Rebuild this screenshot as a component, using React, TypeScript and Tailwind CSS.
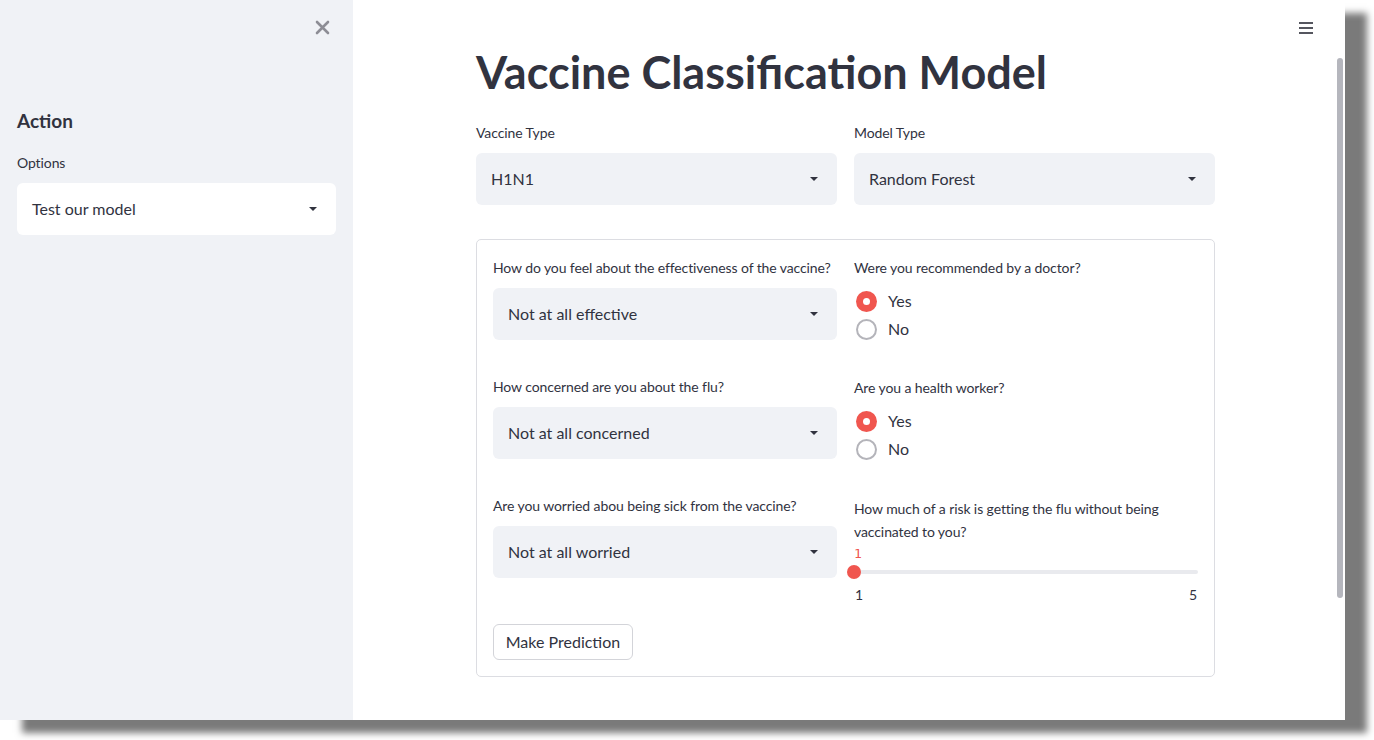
import { useState } from "react";

const font = { fontFamily: "Lato, 'Liberation Sans', sans-serif" };

function Caret() {
  return (
    <svg width="10" height="6" viewBox="0 0 10 6" className="shrink-0">
      <path d="M1 1 L9 1 L5 5 Z" fill="#31333f" />
    </svg>
  );
}

function Select({ value, white }: { value: string; white?: boolean }) {
  return (
    <div
      className={`h-[52px] w-full rounded-md flex items-center justify-between pl-[15px] pr-[18px] text-[16px] text-[#31333f] ${
        white ? "bg-white" : "bg-[#f0f2f6]"
      }`}
    >
      <span>{value}</span>
      <Caret />
    </div>
  );
}

function Label({ children }: { children: React.ReactNode }) {
  return (
    <div className="h-[20px] leading-[20px] text-[14px] tracking-[-0.1px] whitespace-nowrap text-[#31333f]">
      {children}
    </div>
  );
}

function Radio({ label, checked }: { label: string; checked?: boolean }) {
  return (
    <div className="h-[28px] flex items-center gap-[11px]">
      {checked ? (
        <span className="w-[21px] h-[21px] rounded-full bg-[#f0564f] flex items-center justify-center">
          <span className="w-[7px] h-[7px] rounded-full bg-white" />
        </span>
      ) : (
        <span className="w-[21px] h-[21px] rounded-full border-2 border-[#b4b4ba] bg-white" />
      )}
      <span className="text-[16px] text-[#31333f]">{label}</span>
    </div>
  );
}

function RadioGroup({ label }: { label: string }) {
  const [yes] = useState(true);
  return (
    <div className="h-[120px]">
      <Label>{label}</Label>
      <div className="mt-[9px] pl-[2px]">
        <Radio label="Yes" checked={yes} />
        <Radio label="No" checked={!yes} />
      </div>
    </div>
  );
}

function SelectField({ label, value }: { label: string; value: string }) {
  return (
    <div className="h-[119px]">
      <Label>{label}</Label>
      <div className="mt-[10px]">
        <Select value={value} />
      </div>
    </div>
  );
}

export default function App() {
  return (
    <div className="w-[1374px] h-[740px] bg-white overflow-hidden" style={font}>
      <div className="relative w-[1345px] h-[720px] flex bg-white shadow-[22px_13px_7px_rgba(0,0,0,0.52)]">
        {/* sidebar */}
        <aside className="w-[353px] h-full bg-[#f0f2f6] px-[17px]">
          <div className="h-[54px] flex items-center justify-end pr-[6px]">
            <svg width="15" height="15" viewBox="0 0 15 15">
              <path d="M2 2 L13 13 M13 2 L2 13" stroke="#8d8d95" strokeWidth="2.6" strokeLinecap="round" />
            </svg>
          </div>
          <h2 className="mt-[56px] h-[22px] leading-[22px] text-[19px] font-bold text-[#31333f]">Action</h2>
          <div className="mt-[21px]">
            <Label>Options</Label>
          </div>
          <div className="mt-[10px]">
            <Select value="Test our model" white />
          </div>
        </aside>

        {/* main */}
        <main className="flex-1 h-full pl-[123px] pt-[44px]">
          <div className="w-[739px]">
            <h1 className="h-[56px] leading-[56px] text-[45px] font-bold text-[#31333f]">
              Vaccine Classification Model
            </h1>
            <div className="mt-[23px] flex gap-[17px]">
              <div className="flex-1">
                <Label>Vaccine Type</Label>
                <div className="mt-[10px]">
                  <Select value="H1N1" />
                </div>
              </div>
              <div className="flex-1">
                <Label>Model Type</Label>
                <div className="mt-[10px]">
                  <Select value="Random Forest" />
                </div>
              </div>
            </div>

            <div className="mt-[34px] h-[438px] border border-[#dcdde2] rounded-[5px] pt-[18px] px-[16px]">
              <div className="h-[366px] flex items-start gap-[17px]">
                <div className="w-[345px]">
                  <SelectField label="How do you feel about the effectiveness of the vaccine?" value="Not at all effective" />
                  <SelectField label="How concerned are you about the flu?" value="Not at all concerned" />
                  <SelectField label="Are you worried abou being sick from the vaccine?" value="Not at all worried" />
                </div>
                <div className="w-[345px]">
                  <RadioGroup label="Were you recommended by a doctor?" />
                  <RadioGroup label="Are you a health worker?" />
                  <div className="-mt-[1px] text-[14px] tracking-[-0.1px] leading-[23px] text-[#31333f]">
                    How much of a risk is getting the flu without being vaccinated to you?
                  </div>
                  <div
                    className="mt-[2px] h-[18px] leading-[18px] text-[13px] text-[#f0564f]"
                    style={{ fontFamily: "'DejaVu Sans Mono', monospace" }}
                  >
                    1
                  </div>
                  <div className="relative h-[14px] mt-[2px] flex items-center">
                    <div className="w-full h-[4px] rounded-full bg-[#e9eaee]" />
                    <div className="absolute left-[-7px] top-0 w-[14px] h-[14px] rounded-full bg-[#f0564f]" />
                  </div>
                  <div className="mt-[5px] flex justify-between text-[14px] text-[#31333f] pl-[1px] pr-[1px]">
                    <span>1</span>
                    <span>5</span>
                  </div>
                </div>
              </div>
              <button className="h-[36px] w-[140px] rounded-md border border-[#d3d4d9] bg-white text-[16px] text-[#31333f]">
                Make Prediction
              </button>
            </div>
          </div>
        </main>

        {/* menu icon */}
        <div className="absolute top-[21px] right-[31px]">
          <svg width="16" height="14" viewBox="0 0 16 14">
            <path d="M1 2 H15 M1 7 H15 M1 12 H15" stroke="#55565f" strokeWidth="2" />
          </svg>
        </div>
        {/* scrollbar */}
        <div className="absolute top-[58px] right-[2px] w-[6px] h-[540px] rounded-full bg-[#b5b6bd]" />
      </div>
    </div>
  );
}
